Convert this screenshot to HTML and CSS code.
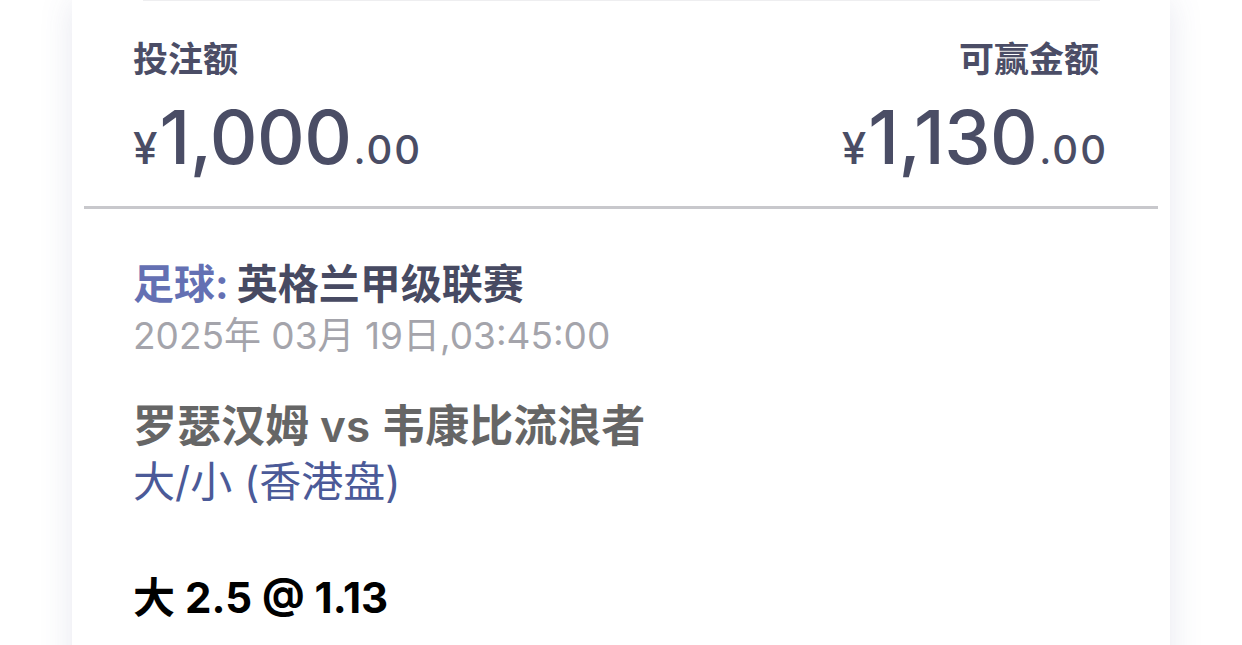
FILE: index.html
```html
<!DOCTYPE html>
<html lang="zh-CN">
<head>
<meta charset="utf-8">
<title>投注单</title>
<link rel="stylesheet" href="styles.css">
</head>
<body>
<div class="card">
  <div class="topline"></div>
  <div class="summary">
    <div class="col">
      <div class="label">投注额</div>
      <div class="amount"><span class="cur">¥</span><span class="int">1,000</span><span class="dec">.00</span></div>
    </div>
    <div class="col col-right">
      <div class="label">可赢金额</div>
      <div class="amount"><span class="cur">¥</span><span class="int">1,130</span><span class="dec">.00</span></div>
    </div>
  </div>
  <div class="divider"></div>
  <div class="event">
    <div class="league"><span class="sport">足球:</span><span class="league-name">英格兰甲级联赛</span></div>
    <div class="date">2025年 03月 19日,03:45:00</div>
    <div class="teams">罗瑟汉姆 vs 韦康比流浪者</div>
    <div class="market">大/小 (香港盘)</div>
    <div class="pick">大 2.5 @ 1.13</div>
  </div>
</div>
</body>
</html>
```

FILE: styles.css
```css
html, body {
  margin: 0;
  padding: 0;
  background: #ffffff;
  overflow: hidden;
}
body {
  font-family: Inter, "Noto Sans CJK SC", sans-serif;
}
.card {
  margin-left: 72px;
  width: 1098px;
  height: 700px;
  background: #ffffff;
  box-shadow: 0 0 32px rgba(70, 80, 140, 0.13);
}
.topline {
  margin: 0 70px 0 71px;
  height: 1px;
  background: #eeeef0;
}
.summary {
  display: flex;
  justify-content: space-between;
  padding: 36px 62px 0 61px;
}
.col {
  display: flex;
  flex-direction: column;
}
.col-right {
  align-items: flex-end;
}
.label {
  font-size: 35px;
  font-weight: 700;
  line-height: 44px;
  color: #4b4d66;
}
.col-right .label {
  margin-right: 9px;
}
.amount {
  display: flex;
  align-items: baseline;
  color: #4a4d65;
  font-weight: 500;
  margin-top: 13px;
  line-height: 86px;
}
.cur {
  font-size: 44px;
  margin-right: 2px;
}
.int {
  font-size: 74px;
  letter-spacing: -0.5px;
}
.dec {
  font-size: 40px;
  letter-spacing: 2px;
  margin-left: 2px;
}
.divider {
  margin: 13px 12px 0;
  height: 3px;
  background: #c8c8cc;
}
.event {
  padding: 48px 61px 0;
}
.league {
  font-size: 41px;
  font-weight: 700;
  line-height: 54px;
  color: #474a62;
}
.sport {
  color: #6470b3;
}
.league-name {
  margin-left: 8px;
}
.date {
  font-size: 37px;
  line-height: 50px;
  color: #a4a4ab;
}
.teams {
  margin-top: 35px;
  font-size: 44px;
  font-weight: 600;
  line-height: 60px;
  color: #666666;
}
.market {
  font-size: 42px;
  line-height: 52px;
  color: #4b5a98;
}
.pick {
  margin-top: 63px;
  font-size: 42px;
  font-weight: 700;
  line-height: 54px;
  color: #000000;
}
```
